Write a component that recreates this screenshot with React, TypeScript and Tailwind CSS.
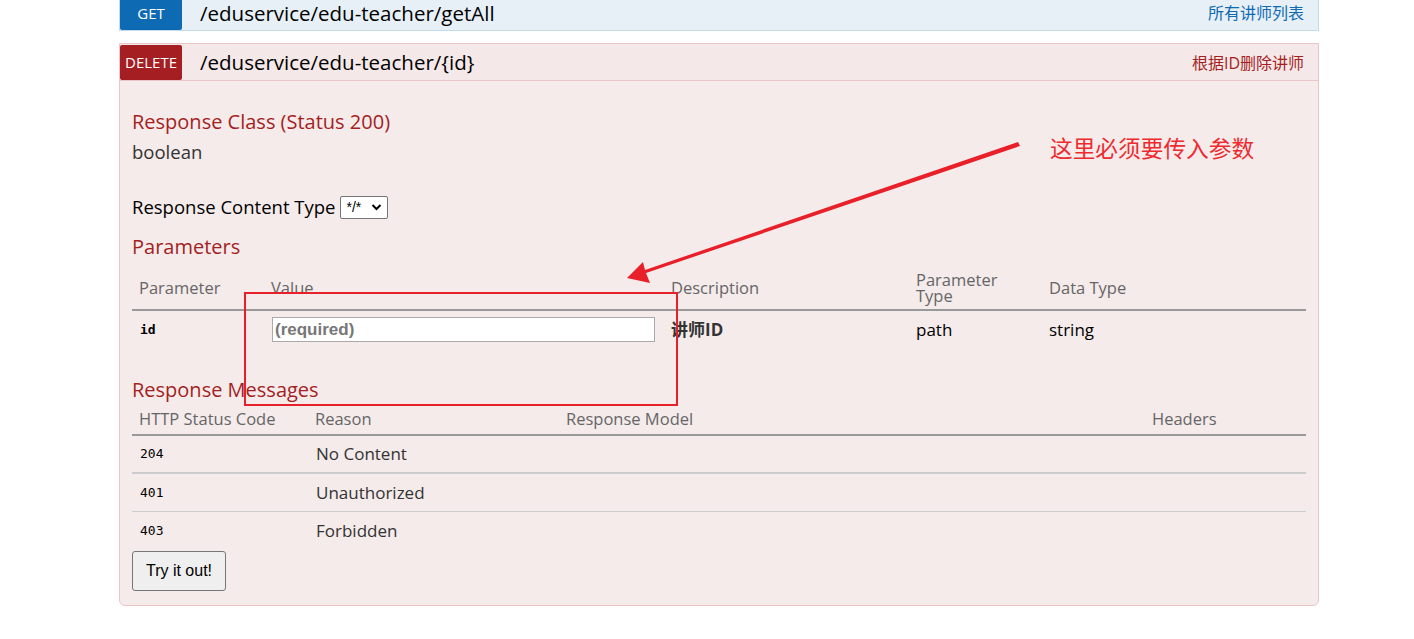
import React from "react";

const sans = "font-['Open_Sans','Noto_Sans_CJK_SC',sans-serif]";

export default function App() {
  return (
    <div className={`relative w-full h-[639px] overflow-hidden bg-white ${sans}`}>
      <div className="ml-[119px] w-[1200px]">
        {/* GET row */}
        <div className="-mt-[8px] flex h-[39px] items-stretch border border-[#c3d9ec] bg-[#e7f0f7]">
          <div className="flex w-[62px] items-center justify-center rounded-[2px] bg-[#0f6ab4] pt-[3px] text-[15px] text-white">
            GET
          </div>
          <div className="flex flex-1 items-center justify-between pl-[18px] pr-[14px] pt-[3px]">
            <span className="text-[20.5px] text-black">/eduservice/edu-teacher/getAll</span>
            <span className="text-[16px] text-[#0f6ab4]">所有讲师列表</span>
          </div>
        </div>

        {/* DELETE block */}
        <div className="mt-[12px] rounded-b-[6px] border border-[#e8c6c7] bg-[#f5ebeb]">
          <div className="flex h-[37px] items-stretch border-b border-[#e8c6c7] bg-[#f5e8e8] pt-[1px]">
            <div className="flex w-[62px] items-center justify-center rounded-[2px] bg-[#a41e22] text-[15px] text-white">
              DELETE
            </div>
            <div className="flex flex-1 items-center justify-between pl-[18px] pr-[14px]">
              <span className="text-[20.5px] text-black">/eduservice/edu-teacher/&#123;id&#125;</span>
              <span className="text-[16px] text-[#a41e22]">根据ID删除讲师</span>
            </div>
          </div>

          <div className="px-[12px] pt-[28px] pb-[14px]">
            <div className="h-[26px] text-[20px] leading-[26px] text-[#a41e22]">Response Class (Status 200)</div>
            <div className="mt-[5px] h-[24px] text-[18.5px] leading-[24px] text-[#333]">boolean</div>

            <div className="mt-[31px] flex h-[24px] items-center gap-[5px] text-[18.5px] leading-[24px] text-black">
              <span>Response Content Type</span>
              <span className="flex h-[23px] w-[48px] items-center justify-between rounded-[2px] border border-[#767676] bg-white px-[5px] text-[14px] font-['Liberation_Sans',sans-serif]">
                <span>*/*</span>
                <svg width="11" height="8" viewBox="0 0 11 8">
                  <path d="M1.5 2 L5.5 6 L9.5 2" fill="none" stroke="#000" strokeWidth="2" />
                </svg>
              </span>
            </div>

            <div className="mt-[15px] h-[26px] text-[20px] leading-[26px] text-[#a41e22]">Parameters</div>

            {/* Parameters table */}
            <div className="mt-[6px]">
              <div className="flex h-[45px] items-center border-b-2 border-[#999] text-[16.5px] leading-[17px] text-[#666]">
                <div className="w-[132px] px-[7px]">Parameter</div>
                <div className="w-[400px] px-[7px]">Value</div>
                <div className="w-[245px] px-[7px]">Description</div>
                <div className="flex w-[133px] flex-col px-[7px]">
                  <span className="leading-[16px]">Parameter</span>
                  <span className="leading-[16px]">Type</span>
                </div>
                <div className="flex-1 px-[7px]">Data Type</div>
              </div>
              <div className="flex h-[38px] items-center pb-[1px] text-[17px] text-[#222]">
                <div className="w-[132px] px-[8px] font-['DejaVu_Sans_Mono',monospace] text-[13px] font-bold text-black">id</div>
                <div className="w-[400px] px-[8px]">
                  <div className="flex h-[25px] w-[383px] items-center border border-[#aaa] bg-white px-[2px] font-['Liberation_Sans',sans-serif] text-[17px] font-bold text-[#777]">
                    (required)
                  </div>
                </div>
                <div className="w-[245px] px-[7px] font-bold text-[#333]">讲师ID</div>
                <div className="w-[133px] px-[7px] text-black">path</div>
                <div className="flex-1 px-[7px] text-black">string</div>
              </div>
            </div>

            <div className="mt-[28px] h-[26px] text-[20px] leading-[26px] text-[#a41e22]">Response Messages</div>

            {/* Responses table */}
            <div>
              <div className="flex h-[33px] items-center border-b-2 border-[#999] pt-[1px] text-[16.5px] text-[#666]">
                <div className="w-[176px] px-[7px]">HTTP Status Code</div>
                <div className="w-[251px] px-[7px]">Reason</div>
                <div className="w-[586px] px-[7px]">Response Model</div>
                <div className="flex-1 px-[7px]">Headers</div>
              </div>
              {[
                ["204", "No Content", "border-b-2"],
                ["401", "Unauthorized", "border-b"],
                ["403", "Forbidden", ""],
              ].map(([code, reason, b]) => (
                <div
                  key={code}
                  className={`flex h-[38px] items-center border-[#ccc] text-[17px] text-[#333] ${b}`}
                >
                  <div className="w-[176px] px-[8px] font-['DejaVu_Sans_Mono',monospace] text-[13px] text-black">{code}</div>
                  <div className="w-[251px] px-[8px]">{reason}</div>
                  <div className="w-[586px] px-[7px]"></div>
                  <div className="flex-1 px-[7px]"></div>
                </div>
              ))}
            </div>

            <button className="mt-[1px] h-[40px] w-[94px] rounded-[3px] border border-[#767676] bg-[#efefef] font-['Liberation_Sans',sans-serif] text-[16px] text-black">
              Try it out!
            </button>
          </div>
        </div>
      </div>

      {/* annotations */}
      <div className="pointer-events-none absolute left-[244px] top-[292px] h-[114px] w-[434px] border-2 border-[#e8202a]" />
      <svg className="pointer-events-none absolute left-0 top-0" width="1414" height="639">
        <polygon points="1018,142 1020,146 646,273 650,283 627,278 643,262 645,270" fill="#e8202a" />
      </svg>
      <div className="absolute left-[1050px] top-[132px] text-[22.7px] leading-[32px] text-[#ee2a2f] font-['Noto_Sans_CJK_SC',sans-serif]">
        这里必须要传入参数
      </div>
    </div>
  );
}
